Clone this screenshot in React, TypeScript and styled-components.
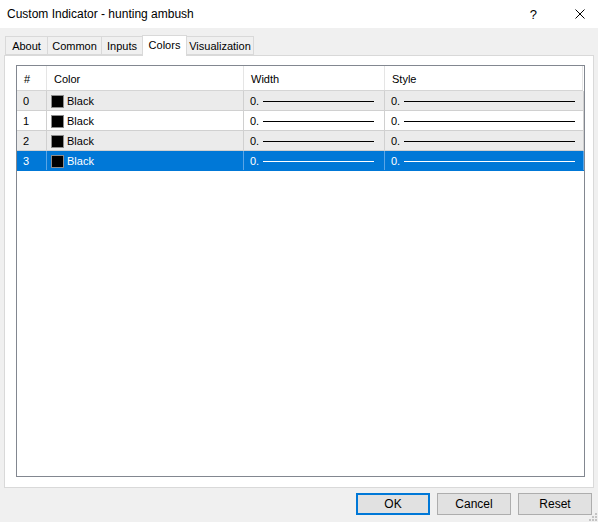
import React from 'react';
import styled, { createGlobalStyle } from 'styled-components';

const GlobalStyle = createGlobalStyle`
  html, body {
    margin: 0;
    padding: 0;
    background: #f0f0f0;
  }
  body {
    font-family: 'Liberation Sans', Arial, sans-serif;
    font-size: 11px;
    color: #000;
  }
`;

const TABS = [
  { label: 'About', width: 43 },
  { label: 'Common', width: 55 },
  { label: 'Inputs', width: 42 },
  { label: 'Colors', width: 45 },
  { label: 'Visualization', width: 68 },
];

const ACTIVE_TAB = 'Colors';
const ROWS = [0, 1, 2, 3];
const SELECTED_ROW = 3;

export default function App() {
  return (
    <>
      <GlobalStyle />
      <Window>
        <TitleBar>
          <Title>Custom Indicator - hunting ambush</Title>
          <TitleButtons>
            <HelpButton>?</HelpButton>
            <CloseButton>
              <svg width="10" height="10" viewBox="0 0 10 10">
                <path d="M0.5 0.5 L9.5 9.5 M9.5 0.5 L0.5 9.5" stroke="#000" strokeWidth="1" />
              </svg>
            </CloseButton>
          </TitleButtons>
        </TitleBar>

        <Body>
          <TabStrip>
            {TABS.map((tab) => (
              <Tab key={tab.label} $width={tab.width} $active={tab.label === ACTIVE_TAB}>
                {tab.label}
              </Tab>
            ))}
          </TabStrip>

          <Panel>
            <List>
              <HeaderRow>
                <HeaderCell>#</HeaderCell>
                <HeaderCell>Color</HeaderCell>
                <HeaderCell>Width</HeaderCell>
                <HeaderCell>Style</HeaderCell>
              </HeaderRow>
              {ROWS.map((i) => {
                const selected = i === SELECTED_ROW;
                return (
                  <Row key={i} $striped={i % 2 === 0} $selected={selected}>
                    <Cell $selected={selected}>{i}</Cell>
                    <Cell $selected={selected} $tight>
                      <Swatch />
                      Black
                    </Cell>
                    <Cell $selected={selected}>
                      0.
                      <LineSample $selected={selected} $gap={4} $end={10} />
                    </Cell>
                    <Cell $selected={selected}>
                      0.
                      <LineSample $selected={selected} $gap={4} $end={8} />
                    </Cell>
                  </Row>
                );
              })}
            </List>
          </Panel>
        </Body>

        <Footer>
          <DialogButton $primary>OK</DialogButton>
          <DialogButton>Cancel</DialogButton>
          <DialogButton>Reset</DialogButton>
        </Footer>

        <Grip>
          <svg width="9" height="9" viewBox="0 0 9 9">
            <rect x="7" y="1" width="2" height="2" fill="#c4c4c4" />
            <rect x="4" y="4" width="2" height="2" fill="#c4c4c4" />
            <rect x="7" y="4" width="2" height="2" fill="#c4c4c4" />
            <rect x="1" y="7" width="2" height="2" fill="#c4c4c4" />
            <rect x="4" y="7" width="2" height="2" fill="#c4c4c4" />
            <rect x="7" y="7" width="2" height="2" fill="#c4c4c4" />
          </svg>
        </Grip>
      </Window>
    </>
  );
}

const Window = styled.div`
  position: relative;
  width: 598px;
  height: 522px;
  display: flex;
  flex-direction: column;
  background: #f0f0f0;
  overflow: hidden;
`;

const TitleBar = styled.div`
  height: 28px;
  flex: none;
  display: flex;
  align-items: center;
  justify-content: space-between;
  background: #fff;
  padding-left: 7px;
`;

const Title = styled.div`
  font-size: 12px;
  color: #000;
`;

const TitleButtons = styled.div`
  display: flex;
  align-items: center;
  gap: 38px;
  padding-right: 13px;
`;

const HelpButton = styled.span`
  font-size: 13px;
  line-height: 1;
`;

const CloseButton = styled.span`
  display: flex;
  width: 10px;
  height: 10px;
`;

const Body = styled.div`
  flex: 1;
  display: flex;
  flex-direction: column;
  padding: 7px 4px 0;
  min-height: 0;
`;

const TabStrip = styled.div`
  height: 20px;
  flex: none;
  display: flex;
  align-items: flex-end;
  padding-left: 1px;
`;

const Tab = styled.div<{ $width: number; $active?: boolean }>`
  position: relative;
  box-sizing: border-box;
  width: ${(p) => p.$width}px;
  height: ${(p) => (p.$active ? 21 : 19)}px;
  margin-left: -1px;
  margin-bottom: ${(p) => (p.$active ? -1 : 0)}px;
  z-index: ${(p) => (p.$active ? 2 : 1)};
  display: flex;
  align-items: ${(p) => (p.$active ? 'flex-start' : 'center')};
  justify-content: center;
  padding-top: ${(p) => (p.$active ? 3 : 1)}px;
  border: 1px solid #d9d9d9;
  border-bottom: ${(p) => (p.$active ? 'none' : '1px solid #d9d9d9')};
  background: ${(p) => (p.$active ? '#fff' : '#f0f0f0')};
  font-size: 11px;
  white-space: nowrap;

  &:first-child {
    margin-left: 0;
  }
`;

const Panel = styled.div`
  flex: none;
  height: 433px;
  box-sizing: border-box;
  display: flex;
  background: #fff;
  border: 1px solid #d9d9d9;
  padding: 9px 8px 10px 11px;
`;

const List = styled.div`
  flex: 1;
  display: flex;
  flex-direction: column;
  border: 1px solid #828790;
  background: #fff;
`;

const columns = '30px 197px 141px 1fr';

const HeaderRow = styled.div`
  display: grid;
  grid-template-columns: ${columns};
  height: 25px;
  box-sizing: border-box;
  border-bottom: 1px solid #d5d5d5;
  margin-right: 1px;
`;

const HeaderCell = styled.div`
  display: flex;
  align-items: center;
  padding: 1px 0 0 7px;
  border-right: 1px solid #e5e5e5;
  font-size: 11px;
`;

const Row = styled.div<{ $striped?: boolean; $selected?: boolean }>`
  display: grid;
  grid-template-columns: ${columns};
  height: 20px;
  box-sizing: border-box;
  border-bottom: 1px solid ${(p) => (p.$selected ? '#0078d7' : '#d0d0d0')};
  background: ${(p) => (p.$selected ? '#0078d7' : p.$striped ? '#ebebeb' : '#fff')};
  color: ${(p) => (p.$selected ? '#fff' : '#000')};
`;

const Cell = styled.div<{ $selected?: boolean; $tight?: boolean }>`
  display: flex;
  align-items: center;
  padding-left: ${(p) => (p.$tight ? 4 : 6)}px;
  padding-top: 1px;
  border-right: 1px solid ${(p) => (p.$selected ? '#5aa5e6' : '#d0d0d0')};
  white-space: nowrap;
  overflow: hidden;
`;

const Swatch = styled.span`
  width: 11px;
  height: 11px;
  flex: none;
  background: #000;
  border: 1px solid #8c8c8c;
  margin-right: 3px;
`;

const LineSample = styled.span<{ $selected?: boolean; $gap: number; $end: number }>`
  flex: 1;
  height: 1px;
  margin-left: ${(p) => p.$gap}px;
  margin-right: ${(p) => p.$end}px;
  background: ${(p) => (p.$selected ? '#fff' : '#000')};
`;

const Footer = styled.div`
  flex: none;
  display: flex;
  justify-content: flex-end;
  gap: 7px;
  height: 22px;
  margin: 5px 0 7px;
  padding-right: 6px;
`;

const DialogButton = styled.button<{ $primary?: boolean }>`
  width: 74px;
  height: 22px;
  box-sizing: border-box;
  padding: 0;
  background: #e1e1e1;
  border: ${(p) => (p.$primary ? '2px solid #0078d7' : '1px solid #adadad')};
  font-family: 'Liberation Sans', Arial, sans-serif;
  font-size: 12px;
  color: #000;
`;

const Grip = styled.div`
  position: absolute;
  right: 1px;
  bottom: 1px;
  width: 9px;
  height: 9px;
  display: flex;
`;
